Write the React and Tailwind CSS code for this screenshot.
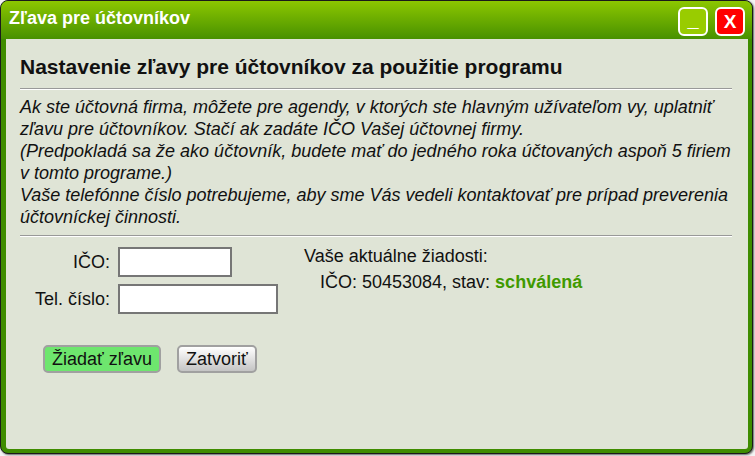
import React from 'react';

const font = { fontFamily: '"Liberation Sans", Arial, sans-serif' };

const Field = ({ label, width }) => (
  <div className="flex items-center">
    <label className="w-[98px] pr-[8px] text-right text-[18px] text-[#111]">{label}</label>
    <input type="text" className={`${width} h-[30px] border-2 border-[#767676] bg-white outline-none`} />
  </div>
);

const App = () => {
  return (
    <div className="w-[755px] h-[456px] overflow-hidden bg-[#f4f4f4]" style={font}>
      <div className="w-[753px] h-[454px] rounded-[8px] border border-[#1a1a1a] bg-[#3f8c00] flex flex-col shadow-[1px_1px_2px_rgba(0,0,0,0.6)]">
        <div className="h-[38px] rounded-t-[7px] bg-gradient-to-b from-[#8cc700] to-[#479100] flex items-start justify-between pl-[8px] pr-[7px]">
          <span className="mt-[4px] text-[18px] font-bold text-white">Zľava pre účtovníkov</span>
          <div className="flex gap-[7px] mt-[6px]">
            <button className="w-[30px] h-[29px] rounded-[6px] border-2 border-white bg-[#99cc00] text-white font-bold text-[20px] leading-none flex items-end justify-center pb-[5px]">_</button>
            <button className="w-[30px] h-[29px] rounded-[6px] border-2 border-white bg-[#ff0000] text-white font-bold text-[19px] leading-none flex items-center justify-center">X</button>
          </div>
        </div>
        <div className="flex-1 ml-[5px] mr-[4px] mb-[4px] bg-[#dfe4d6] rounded-b-[3px] pl-[14px] pr-[16px] pt-[15px]">
          <h1 className="text-[21px] font-bold text-[#111] leading-[26px]">
            Nastavenie zľavy pre účtovníkov za použitie programu
          </h1>
          <div className="mt-[8px] border-t border-[#999] border-b border-b-white" />
          <p className="mt-[6px] italic text-[18px] leading-[22px] text-[#111]">
            Ak ste účtovná firma, môžete pre agendy, v ktorých ste hlavným užívateľom vy, uplatniť zľavu pre účtovníkov. Stačí ak zadáte IČO Vašej účtovnej firmy.
            <br />
            (Predpokladá sa že ako účtovník, budete mať do jedného roka účtovaných aspoň 5 firiem v tomto programe.)
            <br />
            Vaše telefónne číslo potrebujeme, aby sme Vás vedeli kontaktovať pre prípad preverenia účtovníckej činnosti.
          </p>
          <div className="mt-[7px] border-t border-[#999] border-b border-b-white" />
          <div className="flex mt-[5px]">
            <div className="w-[284px] pt-[5px] flex flex-col gap-[7px]">
              <Field label="IČO:" width="w-[114px]" />
              <Field label="Tel. číslo:" width="w-[160px]" />
            </div>
            <div className="pt-[1px] text-[18px] text-[#111] leading-[26px]">
              <div>Vaše aktuálne žiadosti:</div>
              <div className="pl-[16px]">
                IČO: 50453084, stav: <span className="font-bold text-[#3f9a00]">schválená</span>
              </div>
            </div>
          </div>
          <div className="flex gap-[16px] mt-[31px] pl-[23px]">
            <button className="h-[28px] px-[7px] rounded-[5px] border-2 border-[#a0a0a0] bg-[#6ee66e] text-[18px] leading-none text-[#111]">Žiadať zľavu</button>
            <button className="h-[28px] px-[7px] rounded-[5px] border-2 border-[#a0a0a0] bg-gradient-to-b from-white to-[#c4c4c4] text-[18px] leading-none text-[#111]">Zatvoriť</button>
          </div>
        </div>
      </div>
    </div>
  );
};

export default App;
